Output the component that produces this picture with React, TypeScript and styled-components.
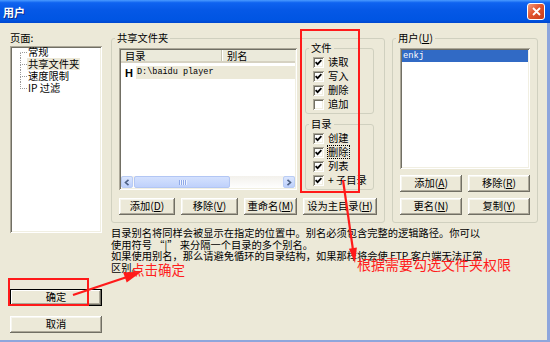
import React from "react";
import styled, { createGlobalStyle, css } from "styled-components";

const UI_FONT = `"Noto Sans CJK SC", "Liberation Sans", sans-serif`;
const MONO_FONT = `"Liberation Mono", "DejaVu Sans Mono", monospace`;

const GlobalStyle = createGlobalStyle`
  html, body {
    margin: 0;
    padding: 0;
    background: #ece9d8;
  }
`;

const Window = styled.div`
  position: relative;
  width: 550px;
  height: 342px;
  display: flex;
  flex-direction: column;
  overflow: hidden;
  font-family: ${UI_FONT};
  font-size: 10.25px;
  color: #000;
`;

const TitleBar = styled.div`
  flex: none;
  height: 23px;
  box-sizing: border-box;
  display: flex;
  align-items: center;
  justify-content: space-between;
  padding: 0 5px 0 3px;
  background: linear-gradient(
    180deg,
    #4a9bff 0%,
    #0f63f0 12%,
    #0558e6 45%,
    #0055e3 85%,
    #0047cf 100%
  );
`;

const TitleText = styled.span`
  color: #fff;
  font-weight: bold;
  font-size: 11px;
  line-height: 14px;
  text-shadow: 1px 1px 0 #0a2a8a;
`;

const CloseButton = styled.div`
  width: 18px;
  height: 17px;
  box-sizing: border-box;
  border: 1px solid #fff;
  border-radius: 3px;
  background: linear-gradient(135deg, #f19a7e 0%, #e2552e 45%, #c63c1c 100%);
  display: flex;
  align-items: center;
  justify-content: center;
`;

const Body = styled.div`
  flex: 1;
  min-height: 0;
  display: flex;
  gap: 9px;
  background: #ece9d8;
  padding: 8px 9px 0 10px;
  border-right: 3px solid #8ea6dc;
  border-bottom: 2px solid #8ea6dc;
`;

const LeftColumn = styled.div`
  width: 92px;
  flex: none;
  display: flex;
  flex-direction: column;
  padding-bottom: 7px;
`;

const PageLabel = styled.div`
  line-height: 14px;
  height: 14px;
`;

const Sunken = styled.div`
  box-sizing: border-box;
  background: #fff;
  box-shadow: inset 1px 1px #aca899, inset -1px -1px #fff,
    inset 2px 2px #716f64, inset -2px -2px #f1efe2;
`;

const TreeBox = styled(Sunken)`
  margin-top: 1px;
  height: 187px;
  padding-left: 10px;
`;

const TreeItem = styled.div`
  height: 12px;
  display: flex;
  align-items: stretch;
`;

const Connector = styled.span`
  width: 7px;
  flex: none;
  display: flex;
  flex-direction: column;
`;

const ConnectorTop = styled.span<{ $first?: boolean }>`
  flex: 1;
  border-bottom: 1px dotted #9a9a9a;
  border-left: 1px dotted ${(p) => (p.$first ? "transparent" : "#9a9a9a")};
`;

const ConnectorBottom = styled.span<{ $last?: boolean }>`
  flex: 1;
  border-left: 1px dotted ${(p) => (p.$last ? "transparent" : "#9a9a9a")};
`;

const TreeLabel = styled.span<{ $selected?: boolean }>`
  padding: 0 1px;
  line-height: 12px;
  white-space: nowrap;
  background: ${(p) => (p.$selected ? "#ece9d8" : "transparent")};
`;

const Button = styled.button<{ $w?: number; $default?: boolean }>`
  box-sizing: border-box;
  width: ${(p) => (p.$w ? `${p.$w}px` : "100%")};
  height: 17px;
  margin: 0;
  padding: 0;
  border: none;
  font-family: ${UI_FONT};
  font-size: 10.25px;
  line-height: 1;
  color: #000;
  background: #ece9d8;
  white-space: nowrap;
  box-shadow: inset -1px -1px #716f64, inset 1px 1px #fff,
    inset -2px -2px #aca899, inset 2px 2px #f6f5ee;
  ${(p) =>
    p.$default &&
    css`
      box-shadow: inset 0 0 0 1px #000, inset -2px -2px #716f64,
        inset 2px 2px #fff, inset -3px -3px #aca899;
    `}
`;

const OkButton = styled(Button)`
  margin-top: auto;
`;

const CancelButton = styled(Button)`
  margin-top: 10px;
`;

const RightColumn = styled.div`
  width: 427px;
  flex: none;
  display: flex;
  flex-direction: column;
`;

const TopRow = styled.div`
  display: flex;
  gap: 7px;
  height: 192px;
`;

const Group = styled.fieldset<{ $w: number }>`
  box-sizing: border-box;
  width: ${(p) => p.$w}px;
  min-width: 0;
  margin: 0;
  padding: 0 7px 7px;
  border: 1px solid #d0d0bf;
  border-radius: 3px;
`;

const Legend = styled.legend`
  padding: 0 2px;
  margin-left: -4px;
  line-height: 14px;
  height: 14px;
`;

const SharedGrid = styled.div`
  display: grid;
  grid-template-columns: 178px 69px;
  column-gap: 8px;
  align-items: start;
`;

const ListView = styled(Sunken)`
  margin-top: 3px;
  height: 142px;
  padding: 2px;
  display: flex;
  flex-direction: column;
`;

const ListHeader = styled.div`
  height: 13px;
  flex: none;
  display: flex;
  box-sizing: border-box;
  background: #ebeadb;
  border-bottom: 2px solid #d6d2c2;
`;

const HeaderCell = styled.div<{ $w?: number }>`
  box-sizing: border-box;
  width: ${(p) => (p.$w ? `${p.$w}px` : "auto")};
  flex: ${(p) => (p.$w ? "none" : 1)};
  padding-left: ${(p) => (p.$w ? 4 : 5)}px;
  line-height: 11px;
  border-right: ${(p) => (p.$w ? "1px solid #c7c5b2" : "none")};
  box-shadow: ${(p) => (p.$w ? "1px 0 #fff" : "none")};
`;

const ListRow = styled.div`
  margin-top: 3px;
  height: 13px;
  display: flex;
  align-items: center;
`;

const HomeMark = styled.span`
  width: 15px;
  padding-left: 4px;
  box-sizing: border-box;
  font-family: "Liberation Sans", sans-serif;
  font-weight: bold;
  font-size: 11px;
`;

const PathCell = styled.span`
  flex: 1;
  height: 13px;
  line-height: 13px;
  padding-left: 1px;
  background: #ece9d8;
  font-family: ${MONO_FONT};
  font-size: 8.5px;
  white-space: nowrap;
`;

const ListFill = styled.div`
  flex: 1;
`;

const HScrollbar = styled.div`
  height: 12px;
  flex: none;
  display: flex;
  background: linear-gradient(180deg, #f3f1ec, #fefefe);
`;

const ScrollArrow = styled.div`
  width: 12px;
  height: 12px;
  box-sizing: border-box;
  border: 1px solid #b9ccf4;
  border-radius: 2px;
  background: linear-gradient(180deg, #dbe6fe, #bccffb);
  display: flex;
  align-items: center;
  justify-content: center;
`;

const ScrollThumb = styled.div`
  width: 96px;
  margin-left: 1px;
  height: 12px;
  box-sizing: border-box;
  border: 1px solid #b2c6f4;
  border-radius: 2px;
  background: linear-gradient(180deg, #d4e1fe, #bfd1fb);
  display: flex;
  align-items: center;
  justify-content: center;
  gap: 1px;
`;

const Grip = styled.span`
  width: 1px;
  height: 5px;
  background: #8fa9e8;
  box-shadow: 1px 0 #eef3ff;
`;

const ScrollSpacer = styled.div`
  flex: 1;
`;

const PermColumn = styled.div`
  margin-top: -4px;
  display: flex;
  flex-direction: column;
  gap: 3px;
`;

const PermGroup = styled.fieldset`
  box-sizing: border-box;
  width: 69px;
  min-width: 0;
  margin: 0;
  padding: 0 0 2px 7px;
  border: 1px solid #d0d0bf;
  border-radius: 3px;
`;

const CheckRow = styled.div`
  height: 14px;
  display: flex;
  align-items: center;
  gap: 4px;
  white-space: nowrap;
`;

const CheckBox = styled.span`
  width: 11px;
  height: 11px;
  flex: none;
  box-sizing: border-box;
  background: #fff;
  box-shadow: inset 1px 1px #aca899, inset -1px -1px #fff,
    inset 2px 2px #716f64, inset -2px -2px #f1efe2;
  display: flex;
  align-items: center;
  justify-content: center;
`;

const CheckLabel = styled.span<{ $focus?: boolean }>`
  line-height: 12px;
  ${(p) =>
    p.$focus &&
    css`
      outline: 1px dotted #000;
      outline-offset: 0;
    `}
`;

const ButtonRow = styled.div`
  margin-top: 8px;
  display: flex;
  gap: 6px;
`;

const UserList = styled(Sunken)`
  margin-top: 3px;
  height: 121px;
  padding: 2px;
`;

const UserRow = styled.div<{ $selected?: boolean }>`
  height: 12px;
  line-height: 12px;
  padding-left: 1px;
  font-family: ${MONO_FONT};
  font-size: 8.75px;
  color: ${(p) => (p.$selected ? "#fff" : "#000")};
  background: ${(p) => (p.$selected ? "#316ac5" : "transparent")};
`;

const UserButtons = styled.div`
  margin-top: 6px;
  display: grid;
  grid-template-columns: 62px 62px;
  gap: 6px;
`;

const Notes = styled.div`
  margin-top: 4px;
  line-height: 11.5px;
  white-space: nowrap;
`;

const Annotations = styled.svg`
  position: absolute;
  left: 0;
  top: 0;
  width: 550px;
  height: 342px;
  pointer-events: none;
`;

const RedNote = styled.div<{ $left: number; $top: number; $size: number }>`
  position: absolute;
  left: ${(p) => p.$left}px;
  top: ${(p) => p.$top}px;
  font-size: ${(p) => p.$size}px;
  line-height: 16px;
  color: #ff1d1d;
  white-space: nowrap;
  pointer-events: none;
`;

const Key = ({ k }: { k: string }) => (
  <>
    (<u>{k}</u>)
  </>
);

const Check = ({ on }: { on: boolean }) => (
  <CheckBox>
    {on && (
      <svg width="7" height="7" viewBox="0 0 7 7">
        <path d="M0.6 3.2 L2.6 5.2 L6.4 1.2" fill="none" stroke="#000" strokeWidth="1.7" />
      </svg>
    )}
  </CheckBox>
);

const treeItems = ["常规", "共享文件夹", "速度限制", "IP 过滤"];

const fileRights = [
  { label: "读取", on: true },
  { label: "写入", on: true },
  { label: "删除", on: true },
  { label: "追加", on: false },
];

const dirRights = [
  { label: "创建", on: true },
  { label: "删除", on: true, focus: true },
  { label: "列表", on: true },
  { label: "+ 子目录", on: true },
];

export default function App() {
  return (
    <>
      <GlobalStyle />
      <Window>
        <TitleBar>
          <TitleText>用户</TitleText>
          <CloseButton>
            <svg width="9" height="9" viewBox="0 0 9 9">
              <path d="M1 1 L8 8 M8 1 L1 8" stroke="#fff" strokeWidth="1.8" />
            </svg>
          </CloseButton>
        </TitleBar>

        <Body>
          <LeftColumn>
            <PageLabel>页面:</PageLabel>
            <TreeBox>
              {treeItems.map((item, i) => (
                <TreeItem key={item}>
                  <Connector>
                    <ConnectorTop $first={i === 0} />
                    <ConnectorBottom $last={i === treeItems.length - 1} />
                  </Connector>
                  <TreeLabel $selected={i === 1}>{item}</TreeLabel>
                </TreeItem>
              ))}
            </TreeBox>
            <OkButton $default>确定</OkButton>
            <CancelButton>取消</CancelButton>
          </LeftColumn>

          <RightColumn>
            <TopRow>
              <Group $w={274}>
                <Legend>共享文件夹</Legend>
                <SharedGrid>
                  <ListView>
                    <ListHeader>
                      <HeaderCell $w={101}>目录</HeaderCell>
                      <HeaderCell>别名</HeaderCell>
                    </ListHeader>
                    <ListRow>
                      <HomeMark>H</HomeMark>
                      <PathCell>D:\baidu player</PathCell>
                    </ListRow>
                    <ListFill />
                    <HScrollbar>
                      <ScrollArrow>
                        <svg width="6" height="7" viewBox="0 0 6 7">
                          <path d="M4.5 0.8 L1.5 3.5 L4.5 6.2" fill="none" stroke="#4d6185" strokeWidth="1.6" />
                        </svg>
                      </ScrollArrow>
                      <ScrollThumb>
                        <Grip />
                        <Grip />
                        <Grip />
                        <Grip />
                      </ScrollThumb>
                      <ScrollSpacer />
                      <ScrollArrow>
                        <svg width="6" height="7" viewBox="0 0 6 7">
                          <path d="M1.5 0.8 L4.5 3.5 L1.5 6.2" fill="none" stroke="#4d6185" strokeWidth="1.6" />
                        </svg>
                      </ScrollArrow>
                    </HScrollbar>
                  </ListView>

                  <PermColumn>
                    <PermGroup>
                      <Legend>文件</Legend>
                      {fileRights.map((r) => (
                        <CheckRow key={r.label}>
                          <Check on={r.on} />
                          <CheckLabel>{r.label}</CheckLabel>
                        </CheckRow>
                      ))}
                    </PermGroup>
                    <PermGroup>
                      <Legend>目录</Legend>
                      {dirRights.map((r) => (
                        <CheckRow key={r.label}>
                          <Check on={r.on} />
                          <CheckLabel $focus={r.focus}>{r.label}</CheckLabel>
                        </CheckRow>
                      ))}
                    </PermGroup>
                  </PermColumn>
                </SharedGrid>

                <ButtonRow>
                  <Button $w={56}>
                    添加<Key k="D" />
                  </Button>
                  <Button $w={57}>
                    移除<Key k="V" />
                  </Button>
                  <Button $w={53}>
                    重命名<Key k="M" />
                  </Button>
                  <Button $w={74}>
                    设为主目录<Key k="H" />
                  </Button>
                </ButtonRow>
              </Group>

              <Group $w={146}>
                <Legend>
                  用户<Key k="U" />
                </Legend>
                <UserList>
                  <UserRow $selected>enkj</UserRow>
                </UserList>
                <UserButtons>
                  <Button>
                    添加<Key k="A" />
                  </Button>
                  <Button>
                    移除<Key k="R" />
                  </Button>
                  <Button>
                    更名<Key k="N" />
                  </Button>
                  <Button>
                    复制<Key k="Y" />
                  </Button>
                </UserButtons>
              </Group>
            </TopRow>

            <Notes>
              目录别名将同样会被显示在指定的位置中。别名必须包含完整的逻辑路径。你可以
              <br />
              使用符号 “|” 来分隔一个目录的多个别名。
              <br />
              如果使用别名，那么请避免循环的目录结构，如果那样将会使 FTP 客户端无法正常
              <br />
              区别。
            </Notes>
          </RightColumn>
        </Body>

        <Annotations viewBox="0 0 550 342">
          <rect x="301" y="30" width="58" height="162" fill="none" stroke="#ff1a1a" strokeWidth="2" />
          <rect x="9" y="279" width="79" height="26" fill="none" stroke="#ff1a1a" strokeWidth="2" />
          <line x1="343" y1="180" x2="353" y2="250" stroke="#ff1a1a" strokeWidth="2.2" />
          <polygon points="355,263 356.9,247.6 348.9,248.7" fill="#ff1a1a" />
          <line x1="73" y1="295" x2="127" y2="277" stroke="#ff1a1a" strokeWidth="2.2" />
          <polygon points="141,272 126.7,282.6 123.1,272.2" fill="#ff1a1a" />
        </Annotations>

        <RedNote $left={357} $top={256} $size={14}>
          根据需要勾选文件夹权限
        </RedNote>
        <RedNote $left={131} $top={261} $size={13.5}>
          点击确定
        </RedNote>
      </Window>
    </>
  );
}
